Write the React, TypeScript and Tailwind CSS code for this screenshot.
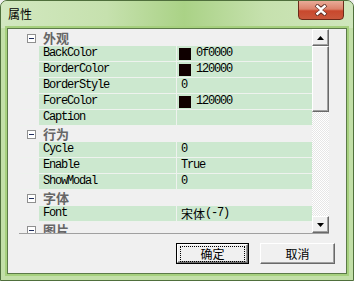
import React from "react";

type Prop = { name: string; value: string; swatch?: string; cjk?: boolean };

const groups: { title: string; rows: Prop[] }[] = [
  {
    title: "外观",
    rows: [
      { name: "BackColor", value: "0f0000", swatch: "#0f0000" },
      { name: "BorderColor", value: "120000", swatch: "#120000" },
      { name: "BorderStyle", value: "0" },
      { name: "ForeColor", value: "120000", swatch: "#120000" },
      { name: "Caption", value: "" },
    ],
  },
  {
    title: "行为",
    rows: [
      { name: "Cycle", value: "0" },
      { name: "Enable", value: "True" },
      { name: "ShowModal", value: "0" },
    ],
  },
  {
    title: "字体",
    rows: [{ name: "Font", value: "(-7)", cjk: true }],
  },
  { title: "图片", rows: [] },
];

const mono = "font-['Liberation_Mono',monospace] text-[12px] tracking-[-1.2px]";

function Arrow({ down }: { down?: boolean }) {
  return (
    <svg width="7" height="4" viewBox="0 0 7 4">
      <path d={down ? "M0 0H7L3.5 4Z" : "M3.5 0L7 4H0Z"} fill="#000" />
    </svg>
  );
}

function ClassicBox({ className, children }: { className?: string; children?: React.ReactNode }) {
  return (
    <div
      className={
        "flex items-center justify-center bg-[#f0f0f0] border-t border-l border-t-white border-l-white border-b border-r border-b-[#696969] border-r-[#696969] shadow-[inset_-1px_-1px_0_#a0a0a0] " +
        (className ?? "")
      }
    >
      {children}
    </div>
  );
}

function CategoryRow({ title }: { title: string }) {
  return (
    <div className="h-[16px] flex items-center shrink-0">
      <div className="w-[24px] h-[16px] flex items-center pl-[8px]">
        <div className="w-[9px] h-[9px] border border-[#8f8f8f] bg-white flex items-center justify-center">
          <div className="w-[5px] h-[1px] bg-[#1f2d5e]" />
        </div>
      </div>
      <span className="font-['Noto_Sans_CJK_SC',sans-serif] text-[13px] leading-[16px] font-bold text-[#666666]">
        {title}
      </span>
    </div>
  );
}

function PropRow({ p }: { p: Prop }) {
  return (
    <div className="h-[16px] flex shrink-0 border-b border-[#eef2ee]">
      <div className="w-[20px]" />
      <div className={"w-[137px] bg-[#cce8cf] pl-[4px] leading-[15px] text-black " + mono}>
        {p.name}
      </div>
      <div className="w-[1px] bg-[#eef2ee]" />
      <div className="w-[135px] bg-[#cce8cf] flex items-center text-black">
        {p.swatch ? (
          <>
            <div className="ml-[2px] w-[12px] h-[12px]" style={{ background: p.swatch }} />
            <span className={"ml-[5px] leading-[15px] " + mono}>{p.value}</span>
          </>
        ) : p.cjk ? (
          <span className="pl-[4px] flex items-center leading-[15px]">
            <span className="font-['Noto_Sans_CJK_SC',sans-serif] text-[12px]">宋体</span>
            <span className={mono}>{p.value}</span>
          </span>
        ) : (
          <span className={"pl-[4px] leading-[15px] " + mono}>{p.value}</span>
        )}
      </div>
    </div>
  );
}

export default function App() {
  return (
    <div className="w-[354px] h-[281px] bg-[#f0f0f0] font-['Noto_Sans_CJK_SC',sans-serif]">
      <div className="w-full h-full rounded-t-[7px] border border-[#4f6f3c] bg-[#c2dfa8] flex flex-col overflow-hidden">
        {/* title bar */}
        <div className="h-[27px] shrink-0 flex justify-between bg-[linear-gradient(90deg,#d2e8c0_0%,#c6e1ae_30%,#aad286_52%,#c6e1ae_75%,#cfe6bc_100%)]">
          <span className="pl-[7px] pt-[5px] text-[12px] leading-[16px] text-black">属性</span>
          <div className="mr-[9px] -mt-[1px] w-[46px] h-[20px] rounded-b-[4px] border border-[#6a2a1a] bg-[linear-gradient(180deg,#e9ab98_0%,#dc826b_45%,#c8482d_55%,#c9573b_100%)] flex items-center justify-center">
            <svg width="14" height="12" viewBox="0 0 14 12">
              <path d="M2 1L7 5L12 1M2 11L7 7L12 11" stroke="#5a2a20" strokeWidth="4" fill="none" />
              <path d="M2.5 1.5L7 5.5L11.5 1.5M2.5 10.5L7 6.5L11.5 10.5" stroke="#fff" strokeWidth="2.4" fill="none" />
            </svg>
          </div>
        </div>

        {/* client */}
        <div className="mx-[6px] mb-[6px] flex-1 border border-[#5b7a48] bg-[#f0f0f0] shadow-[0_0_0_2px_#a6d07e] flex flex-col">
          <div className="ml-[11px] w-[310px] h-[205px] border-b border-[#a0a0a0] flex">
            <div className="w-[293px] h-[204px] overflow-hidden pt-[1px] flex flex-col">
              {groups.map((g) => (
                <React.Fragment key={g.title}>
                  <CategoryRow title={g.title} />
                  {g.rows.map((r) => (
                    <PropRow key={r.name} p={r} />
                  ))}
                </React.Fragment>
              ))}
            </div>
            {/* scrollbar */}
            <div className="w-[17px] h-[204px] flex flex-col">
              <ClassicBox className="h-[17px] shrink-0">
                <Arrow />
              </ClassicBox>
              <ClassicBox className="h-[66px] shrink-0" />
              <div className="flex-1 bg-[repeating-conic-gradient(#ffffff_0%_25%,#e6e6e6_0%_50%)] bg-[length:2px_2px]" />
              <ClassicBox className="h-[17px] shrink-0">
                <Arrow down />
              </ClassicBox>
            </div>
          </div>

          <div className="mt-[9px] pr-[11px] flex justify-end gap-[11px]">
            <div className="w-[73px] h-[21px] border border-black">
              <ClassicBox className="w-full h-full">
                <span className="px-[2px] border border-dotted border-black text-[12px] leading-[14px] w-[65px] text-center">
                  确定
                </span>
              </ClassicBox>
            </div>
            <ClassicBox className="w-[75px] h-[21px]">
              <span className="text-[12px] leading-[14px]">取消</span>
            </ClassicBox>
          </div>
        </div>
      </div>
    </div>
  );
}
